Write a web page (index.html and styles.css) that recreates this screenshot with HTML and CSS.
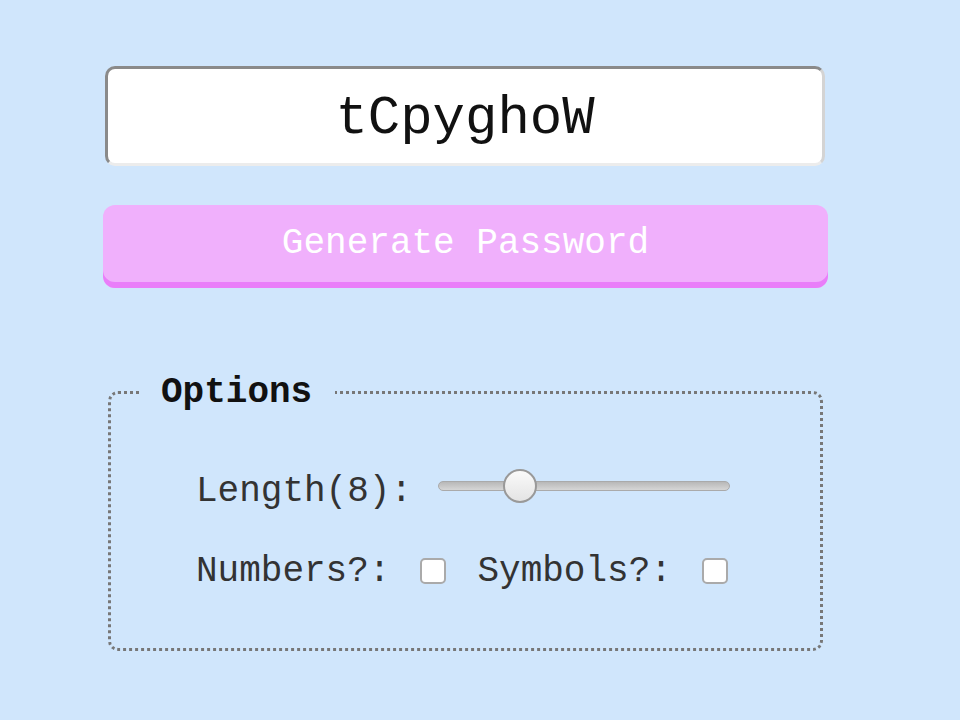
FILE: index.html
```
<!DOCTYPE html>
<html>
<head>
<meta charset="utf-8">
<link rel="stylesheet" href="styles.css">
</head>
<body>
<main class="app">
  <input class="output" type="text" value="tCpyghoW" readonly>
  <button class="generate">Generate Password</button>
  <fieldset class="options">
    <legend>Options</legend>
    <div class="row">
      <label class="lbl" for="len">Length(8):</label>
      <input class="slider" id="len" type="range" min="4" max="20" value="8">
    </div>
    <div class="row">
      <label class="lbl" for="num">Numbers?:</label>
      <input class="check" id="num" type="checkbox">
      <label class="lbl sym" for="sym">Symbols?:</label>
      <input class="check" id="sym" type="checkbox">
    </div>
  </fieldset>
</main>
</body>
</html>
```
FILE: styles.css
```
html, body {
  margin: 0;
  padding: 0;
  background: #d0e6fc;
  font-family: "Liberation Mono", "Courier New", monospace;
  color: #222;
}
.app {
  display: flex;
  flex-direction: column;
  align-items: flex-start;
  padding: 66px 0 0 103px;
}
.output {
  box-sizing: border-box;
  width: 720px;
  height: 100px;
  margin-left: 2px;
  border-top: 3px solid #8a8a8a;
  border-left: 3px solid #8a8a8a;
  border-right: 3px solid #d4d4d4;
  border-bottom: 3px solid #ececec;
  border-radius: 10px;
  background: #fff;
  font-family: "Liberation Mono", "Courier New", monospace;
  font-size: 54px;
  text-align: center;
  color: #111;
  outline: none;
  padding: 4px 0 0 0;
}
.generate {
  box-sizing: border-box;
  width: 725px;
  height: 83px;
  margin-top: 39px;
  border: none;
  border-radius: 12px;
  background: #f0b0fc;
  box-shadow: inset 0 -6px 0 #e97ef9;
  color: #fff;
  font-family: "Liberation Mono", "Courier New", monospace;
  font-size: 36px;
  padding: 0 0 6px 0;
}
.options {
  box-sizing: border-box;
  width: 715px;
  height: 279px;
  margin: 84px 0 0 5px;
  padding: 53px 0 0 28px;
  border: 3px dotted #777;
  border-radius: 10px;
}
.options legend {
  padding: 0 23px 0 22px;
  font-size: 36px;
  font-weight: bold;
  color: #111;
}
.row {
  display: flex;
  align-items: center;
  height: 50px;
  margin-left: 57px;
}
.row + .row {
  margin-top: 30px;
}
.lbl {
  font-size: 36px;
  color: #333;
}
.slider {
  -webkit-appearance: none;
  appearance: none;
  width: 292px;
  height: 34px;
  margin: 0 0 10px 26px;
  background: transparent;
}
.slider::-webkit-slider-runnable-track {
  height: 10px;
  border-radius: 5px;
  border: 1px solid #aaa;
  background: linear-gradient(#b8b8b8, #d6d6d6);
}
.slider::-webkit-slider-thumb {
  -webkit-appearance: none;
  width: 34px;
  height: 34px;
  margin-top: -13px;
  border-radius: 50%;
  border: 2px solid #999;
  box-sizing: border-box;
  background: linear-gradient(#fafafa, #e4e4e4);
}
.check {
  -webkit-appearance: none;
  appearance: none;
  box-sizing: border-box;
  width: 26px;
  height: 26px;
  margin: 0 0 0 30px;
  border: 2px solid #aaa;
  border-radius: 5px;
  background: #fff;
}
.sym {
  margin-left: 31px;
}
```
